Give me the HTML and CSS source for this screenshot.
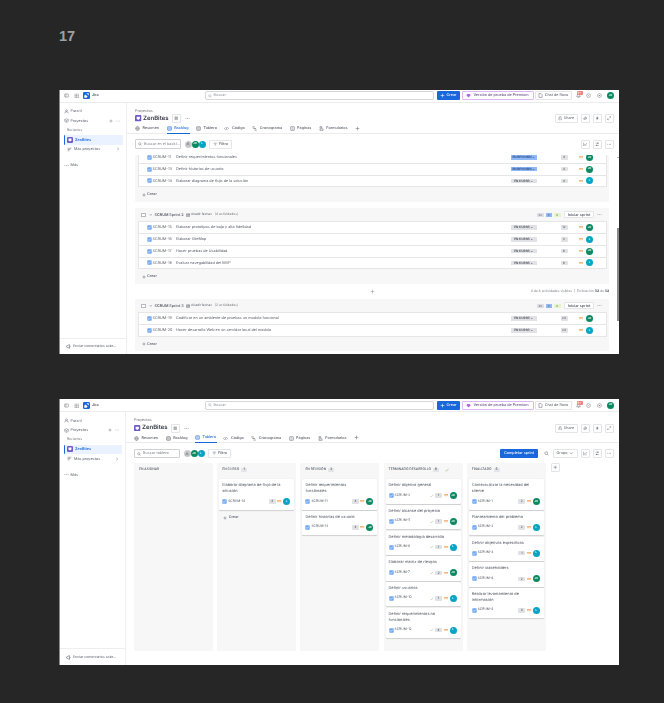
FILE: index.html
```html
<!DOCTYPE html>
<html lang="es">
<head>
  <meta charset="UTF-8">
  <title>17</title>
  <link rel="stylesheet" href="styles.css">
</head>
<body>
  <svg class="defs" width="0" height="0">
    <symbol id="i-panel" viewBox="0 0 16 16"><rect x="2" y="3" width="12" height="10" rx="1.5" fill="none" stroke="currentColor" stroke-width="1.6"/><path d="M6 3v10" stroke="currentColor" stroke-width="1.6"/></symbol>
    <symbol id="i-apps" viewBox="0 0 16 16"><path d="M2 2h3v3H2zM7 2h3v3H7zM12 2h3v3h-3zM2 7h3v3H2zM7 7h3v3H7zM12 7h3v3h-3zM2 12h3v3H2zM7 12h3v3H7zM12 12h3v3h-3z" fill="currentColor"/></symbol>
    <symbol id="i-jira" viewBox="0 0 16 16"><rect width="16" height="16" rx="3" fill="#1868db"/><path d="M8 3l5 0v5zM3 8l5 5H3zM5.5 5.5l5 5-2.5 2.5-5-5z" fill="#fff"/></symbol>
    <symbol id="i-search" viewBox="0 0 16 16"><circle cx="7" cy="7" r="4.5" fill="none" stroke="currentColor" stroke-width="1.6"/><path d="M10.5 10.5L14 14" stroke="currentColor" stroke-width="1.6"/></symbol>
    <symbol id="i-plus" viewBox="0 0 16 16"><path d="M8 2v12M2 8h12" stroke="currentColor" stroke-width="1.8"/></symbol>
    <symbol id="i-gem" viewBox="0 0 16 16"><path d="M4 3h8l3 4-7 7-7-7z" fill="currentColor"/></symbol>
    <symbol id="i-note" viewBox="0 0 16 16"><path d="M3 2h7l3 3v9H3z" fill="none" stroke="currentColor" stroke-width="1.5"/></symbol>
    <symbol id="i-bell" viewBox="0 0 16 16"><path d="M8 2a4 4 0 0 1 4 4v4l2 2H2l2-2V6a4 4 0 0 1 4-4zM6.5 14h3" fill="none" stroke="currentColor" stroke-width="1.5"/></symbol>
    <symbol id="i-help" viewBox="0 0 16 16"><circle cx="8" cy="8" r="6" fill="none" stroke="currentColor" stroke-width="1.6"/><circle cx="8" cy="8" r="1.5" fill="currentColor"/></symbol>
    <symbol id="i-gear" viewBox="0 0 16 16"><path d="M8 1.5l5.6 3.2v6.6L8 14.5l-5.6-3.2V4.7z" fill="none" stroke="currentColor" stroke-width="1.6"/><circle cx="8" cy="8" r="2" fill="currentColor"/></symbol>
    <symbol id="i-user" viewBox="0 0 16 16"><circle cx="8" cy="5.5" r="3" fill="none" stroke="currentColor" stroke-width="1.6"/><path d="M2.5 14a5.5 5.5 0 0 1 11 0" fill="none" stroke="currentColor" stroke-width="1.6"/></symbol>
    <symbol id="i-box" viewBox="0 0 16 16"><path d="M2 5l6-3 6 3v6l-6 3-6-3zM2 5l6 3 6-3M8 8v6" fill="none" stroke="currentColor" stroke-width="1.4"/></symbol>
    <symbol id="i-list" viewBox="0 0 16 16"><path d="M2 4h12M2 8h9M2 12h6" stroke="currentColor" stroke-width="1.8"/></symbol>
    <symbol id="i-logo" viewBox="0 0 16 16"><rect width="16" height="16" rx="3" fill="#6e5dc6"/><path d="M4 4h8v5l-4 3-4-3z" fill="#fff"/></symbol>
    <symbol id="i-team" viewBox="0 0 16 16"><path d="M3 3h4v4H3zM9 3h4v4H9zM3 9h4v4H3zM9 9h4v4H9z" fill="none" stroke="currentColor" stroke-width="1.5"/></symbol>
    <symbol id="i-dots" viewBox="0 0 16 16"><circle cx="3" cy="8" r="1.4" fill="currentColor"/><circle cx="8" cy="8" r="1.4" fill="currentColor"/><circle cx="13" cy="8" r="1.4" fill="currentColor"/></symbol>
    <symbol id="i-lock" viewBox="0 0 16 16"><rect x="3" y="7" width="10" height="7" rx="1" fill="none" stroke="currentColor" stroke-width="1.6"/><path d="M5 7V4.500a3 3 0 0 1 6 0" fill="none" stroke="currentColor" stroke-width="1.6"/></symbol>
    <symbol id="i-link" viewBox="0 0 16 16"><path d="M3 13l4-4M6 3l7 7M9 2l5 5-3 3-5-5zM2 9l5 5 2-2-5-5z" fill="none" stroke="currentColor" stroke-width="1.5"/></symbol>
    <symbol id="i-bolt" viewBox="0 0 16 16"><path d="M9 1L3 9h4l-1 6 7-9H9z" fill="currentColor"/></symbol>
    <symbol id="i-expand" viewBox="0 0 16 16"><path d="M9 2h5v5M14 2L9 7M7 14H2V9M2 14l5-5" fill="none" stroke="currentColor" stroke-width="1.6"/></symbol>
    <symbol id="i-globe" viewBox="0 0 16 16"><circle cx="8" cy="8" r="6" fill="none" stroke="currentColor" stroke-width="1.6"/><path d="M2 8h12M8 2c-3 4-3 8 0 12M8 2c3 4 3 8 0 12" fill="none" stroke="currentColor" stroke-width="1.2"/></symbol>
    <symbol id="i-backlog" viewBox="0 0 16 16"><rect x="2" y="2" width="12" height="12" rx="1.5" fill="none" stroke="currentColor" stroke-width="1.6"/><path d="M2 6h12M2 10h12" stroke="currentColor" stroke-width="1.6"/></symbol>
    <symbol id="i-board" viewBox="0 0 16 16"><rect x="1.500" y="2.500" width="13" height="11" rx="1.500" fill="none" stroke="currentColor" stroke-width="1.6"/><path d="M6 2.500v11M10 2.500v11" stroke="currentColor" stroke-width="1.4"/></symbol>
    <symbol id="i-code" viewBox="0 0 16 16"><path d="M5 4L1.500 8 5 12M11 4l3.500 4-3.500 4M9.500 3l-3 10" fill="none" stroke="currentColor" stroke-width="1.5"/></symbol>
    <symbol id="i-gantt" viewBox="0 0 16 16"><path d="M1 3h8M4 8h9M8 13h7" stroke="currentColor" stroke-width="2"/></symbol>
    <symbol id="i-pages" viewBox="0 0 16 16"><rect x="2" y="2" width="12" height="12" rx="1.500" fill="none" stroke="currentColor" stroke-width="1.6"/><path d="M5 6h6M5 10h6" stroke="currentColor" stroke-width="1.4"/></symbol>
    <symbol id="i-form" viewBox="0 0 16 16"><path d="M3 2h6v4H3zM3 9h10v5H3z" fill="none" stroke="currentColor" stroke-width="1.6"/></symbol>
    <symbol id="i-filter" viewBox="0 0 16 16"><path d="M2 4h12M4.500 8h7M7 12h2" stroke="currentColor" stroke-width="1.8"/></symbol>
    <symbol id="i-chart" viewBox="0 0 16 16"><path d="M2 2v12h12M4.500 10l3-3 2 2 4-5" fill="none" stroke="currentColor" stroke-width="1.6"/></symbol>
    <symbol id="i-sliders" viewBox="0 0 16 16"><path d="M2 4h12M2 12h12" stroke="currentColor" stroke-width="1.6"/><circle cx="10" cy="4" r="2" fill="currentColor"/><circle cx="6" cy="12" r="2" fill="currentColor"/></symbol>
    <symbol id="i-task" viewBox="0 0 16 16"><rect x="1" y="1" width="14" height="14" rx="2" fill="#6fa6f3"/><path d="M4 8.500l2.800 2.500L12 5" fill="none" stroke="#fff" stroke-width="2"/></symbol>
    <symbol id="i-medium" viewBox="0 0 16 16" preserveAspectRatio="none"><path d="M0 4h16M0 12h16" stroke="#f2a35a" stroke-width="5"/></symbol>
    <symbol id="i-check" viewBox="0 0 16 16"><path d="M2 9l4 4 8-10" fill="none" stroke="currentColor" stroke-width="2.400"/></symbol>
    <symbol id="i-chev-d" viewBox="0 0 16 16"><path d="M3 5l5 6 5-6" fill="none" stroke="currentColor" stroke-width="1.800"/></symbol>
    <symbol id="i-chev-r" viewBox="0 0 16 16"><path d="M5 3l6 5-6 5" fill="none" stroke="currentColor" stroke-width="1.800"/></symbol>
    <symbol id="i-cal" viewBox="0 0 16 16"><path d="M2 3h12v11H2zM2 7h12M6 9l2 3 5-9" fill="none" stroke="currentColor" stroke-width="1.700"/></symbol>
    <symbol id="i-feedback" viewBox="0 0 16 16"><path d="M2 6l9-4v12L2 10zM13 6v4" fill="none" stroke="currentColor" stroke-width="1.700"/></symbol>
  </svg>

  <h1 class="slide-no">17</h1>

  <!-- captura backlog -->
  <section class="shot shot-backlog">
    <header class="topbar">
      <svg class="ico nav-ico"><use href="#i-panel"/></svg>
      <svg class="ico nav-ico"><use href="#i-apps"/></svg>
      <svg class="ico jira-logo"><use href="#i-jira"/></svg>
      <span class="jira-name">Jira</span>
      <div class="global-search"><svg class="ico"><use href="#i-search"/></svg>Buscar</div>
      <button class="btn-create"><svg class="ico"><use href="#i-plus"/></svg>Crear</button>
      <button class="btn-premium"><svg class="ico"><use href="#i-gem"/></svg>Versión de prueba de Premium</button>
      <button class="btn-rovo"><svg class="ico"><use href="#i-note"/></svg>Chat de Rovo</button>
      <span class="bell"><svg class="ico"><use href="#i-bell"/></svg><i class="badge">9+</i></span>
      <svg class="ico top-ico"><use href="#i-help"/></svg>
      <svg class="ico top-ico"><use href="#i-gear"/></svg>
      <span class="avatar green top-avatar">JR</span>
    </header>
    <div class="body-grid">
      <aside class="sidebar">
        <div class="side-row"><svg class="ico"><use href="#i-user"/></svg>Para ti</div>
        <div class="side-row"><svg class="ico"><use href="#i-box"/></svg>Proyectos<span class="side-end"><svg class="ico"><use href="#i-plus"/></svg><svg class="ico"><use href="#i-dots"/></svg></span></div>
        <div class="side-label">Recientes</div>
        <div class="side-row side-active"><svg class="ico"><use href="#i-logo"/></svg>ZenBites</div>
        <div class="side-row side-sub"><svg class="ico"><use href="#i-list"/></svg>Más proyectos<span class="side-end"><svg class="ico"><use href="#i-chev-r"/></svg></span></div>
        <div class="side-row side-more"><svg class="ico"><use href="#i-dots"/></svg>Más</div>
        <div class="side-feedback"><svg class="ico"><use href="#i-feedback"/></svg>Enviar comentarios sobr...</div>
      </aside>
      <main class="main">
        <div class="crumb">Proyectos</div>
        <div class="title-row">
          <svg class="ico title-logo"><use href="#i-logo"/></svg>
          <h2>ZenBites</h2>
          <span class="tool-box title-team"><svg class="ico"><use href="#i-team"/></svg></span>
          <svg class="ico title-dots"><use href="#i-dots"/></svg>
          <span class="tool-box share"><svg class="ico"><use href="#i-lock"/></svg>Share</span>
          <span class="tool-box"><svg class="ico"><use href="#i-link"/></svg></span>
          <span class="tool-box"><svg class="ico"><use href="#i-bolt"/></svg></span>
          <span class="tool-box"><svg class="ico"><use href="#i-expand"/></svg></span>
        </div>
        <nav class="tabs">
          <a class="tab"><svg class="ico"><use href="#i-globe"/></svg>Resumen</a>
          <a class="tab tab-active"><svg class="ico"><use href="#i-backlog"/></svg>Backlog</a>
          <a class="tab"><svg class="ico"><use href="#i-board"/></svg>Tablero</a>
          <a class="tab"><svg class="ico"><use href="#i-code"/></svg>Código</a>
          <a class="tab"><svg class="ico"><use href="#i-gantt"/></svg>Cronograma</a>
          <a class="tab"><svg class="ico"><use href="#i-pages"/></svg>Páginas</a>
          <a class="tab"><svg class="ico"><use href="#i-form"/></svg>Formularios</a>
          <svg class="ico tab-plus"><use href="#i-plus"/></svg>
        </nav>
        <div class="toolbar">
          <div class="search-box"><svg class="ico"><use href="#i-search"/></svg>Buscar en el backl...</div>
          <div class="avatars"><span class="avatar grey"><svg class="ico"><use href="#i-user"/></svg></span><span class="avatar green">JR</span><span class="avatar teal">L</span></div>
          <span class="tool-box filter"><svg class="ico"><use href="#i-filter"/></svg>Filtro</span>
          <span class="tool-box push"><svg class="ico"><use href="#i-chart"/></svg></span>
          <span class="tool-box"><svg class="ico"><use href="#i-sliders"/></svg></span>
          <span class="tool-box"><svg class="ico"><use href="#i-dots"/></svg></span>
        </div>
        <div class="backlog">
          <div class="sprint sprint-first">
            <div class="rows">
              <div class="row"><svg class="ico"><use href="#i-task"/></svg><span class="key">SCRUM-11</span><span class="name">Definir requerimientos funcionales</span><span class="status review">EN REVISIÓN ⌄</span><span class="points">4</span><svg class="ico prio"><use href="#i-medium"/></svg><span class="avatar green">JR</span></div>
              <div class="row"><svg class="ico"><use href="#i-task"/></svg><span class="key">SCRUM-13</span><span class="name">Definir historias de usuario</span><span class="status review">EN REVISIÓN ⌄</span><span class="points">4</span><svg class="ico prio"><use href="#i-medium"/></svg><span class="avatar green">JR</span></div>
              <div class="row"><svg class="ico"><use href="#i-task"/></svg><span class="key">SCRUM-14</span><span class="name">Elaborar diagrama de flujo de la solución</span><span class="status">EN CURSO ⌄</span><span class="points">4</span><svg class="ico prio"><use href="#i-medium"/></svg><span class="avatar teal">L</span></div>
            </div>
            <div class="create"><svg class="ico"><use href="#i-plus"/></svg>Crear</div>
          </div>

          <div class="sprint sprint-second">
            <div class="sprint-head">
              <span class="checkbox"></span>
              <svg class="ico sprint-chev"><use href="#i-chev-d"/></svg>
              <strong>SCRUM Sprint 2</strong>
              <svg class="ico sprint-cal"><use href="#i-cal"/></svg>
              <span class="sprint-dates">Añadir fechas</span>
              <span class="sprint-count">(4 actividades)</span>
              <span class="chip chip-grey">32</span><span class="chip chip-blue">0</span><span class="chip chip-green">0</span>
              <span class="tool-box start">Iniciar sprint</span>
              <svg class="ico sprint-dots"><use href="#i-dots"/></svg>
            </div>
            <div class="rows">
              <div class="row"><svg class="ico"><use href="#i-task"/></svg><span class="key">SCRUM-15</span><span class="name">Elaborar prototipos de bajo y alta fidelidad</span><span class="status">EN CURSO ⌄</span><span class="points">12</span><svg class="ico prio"><use href="#i-medium"/></svg><span class="avatar green">JR</span></div>
              <div class="row"><svg class="ico"><use href="#i-task"/></svg><span class="key">SCRUM-16</span><span class="name">Elaborar SiteMap</span><span class="status">EN CURSO ⌄</span><span class="points">8</span><svg class="ico prio"><use href="#i-medium"/></svg><span class="avatar teal">L</span></div>
              <div class="row"><svg class="ico"><use href="#i-task"/></svg><span class="key">SCRUM-17</span><span class="name">Hacer pruebas de Usabilidad</span><span class="status">EN CURSO ⌄</span><span class="points">6</span><svg class="ico prio"><use href="#i-medium"/></svg><span class="avatar green">JR</span></div>
              <div class="row"><svg class="ico"><use href="#i-task"/></svg><span class="key">SCRUM-18</span><span class="name">Evaluar navegabilidad del MVP</span><span class="status">EN CURSO ⌄</span><span class="points">6</span><svg class="ico prio"><use href="#i-medium"/></svg><span class="avatar teal">L</span></div>
            </div>
            <div class="create"><svg class="ico"><use href="#i-plus"/></svg>Crear</div>
          </div>

          <div class="sprint-foot">
            <svg class="ico foot-ico"><use href="#i-plus"/></svg>
            <span>4 de 4 actividades visibles&nbsp; | &nbsp;Estimación <b>32</b> de <b>32</b></span>
          </div>

          <div class="sprint">
            <div class="sprint-head">
              <span class="checkbox"></span>
              <svg class="ico sprint-chev"><use href="#i-chev-d"/></svg>
              <strong>SCRUM Sprint 3</strong>
              <svg class="ico sprint-cal"><use href="#i-cal"/></svg>
              <span class="sprint-dates">Añadir fechas</span>
              <span class="sprint-count">(2 actividades)</span>
              <span class="chip chip-grey">48</span><span class="chip chip-blue">0</span><span class="chip chip-green">0</span>
              <span class="tool-box start">Iniciar sprint</span>
              <svg class="ico sprint-dots"><use href="#i-dots"/></svg>
            </div>
            <div class="rows">
              <div class="row"><svg class="ico"><use href="#i-task"/></svg><span class="key">SCRUM-19</span><span class="name">Codificar en un ambiente de pruebas un modulo funcional</span><span class="status">EN CURSO ⌄</span><span class="points">24</span><svg class="ico prio"><use href="#i-medium"/></svg><span class="avatar green">JR</span></div>
              <div class="row"><svg class="ico"><use href="#i-task"/></svg><span class="key">SCRUM-20</span><span class="name">Hacer desarrollo Web en un servidor local del modulo</span><span class="status">EN CURSO ⌄</span><span class="points">24</span><svg class="ico prio"><use href="#i-medium"/></svg><span class="avatar teal">L</span></div>
            </div>
            <div class="create"><svg class="ico"><use href="#i-plus"/></svg>Crear</div>
          </div>
          <span class="scroll-arrow"></span>
          <span class="scroll-thumb"></span>
        </div>
      </main>
    </div>
  </section>

  <!-- captura tablero -->
  <section class="shot shot-board">
    <header class="topbar">
      <svg class="ico nav-ico"><use href="#i-panel"/></svg>
      <svg class="ico nav-ico"><use href="#i-apps"/></svg>
      <svg class="ico jira-logo"><use href="#i-jira"/></svg>
      <span class="jira-name">Jira</span>
      <div class="global-search"><svg class="ico"><use href="#i-search"/></svg>Buscar</div>
      <button class="btn-create"><svg class="ico"><use href="#i-plus"/></svg>Crear</button>
      <button class="btn-premium"><svg class="ico"><use href="#i-gem"/></svg>Versión de prueba de Premium</button>
      <button class="btn-rovo"><svg class="ico"><use href="#i-note"/></svg>Chat de Rovo</button>
      <span class="bell"><svg class="ico"><use href="#i-bell"/></svg><i class="badge">9+</i></span>
      <svg class="ico top-ico"><use href="#i-help"/></svg>
      <svg class="ico top-ico"><use href="#i-gear"/></svg>
      <span class="avatar green top-avatar">JR</span>
    </header>
    <div class="body-grid">
      <aside class="sidebar">
        <div class="side-row"><svg class="ico"><use href="#i-user"/></svg>Para ti</div>
        <div class="side-row"><svg class="ico"><use href="#i-box"/></svg>Proyectos<span class="side-end"><svg class="ico"><use href="#i-plus"/></svg><svg class="ico"><use href="#i-dots"/></svg></span></div>
        <div class="side-label">Recientes</div>
        <div class="side-row side-active"><svg class="ico"><use href="#i-logo"/></svg>ZenBites</div>
        <div class="side-row side-sub"><svg class="ico"><use href="#i-list"/></svg>Más proyectos<span class="side-end"><svg class="ico"><use href="#i-chev-r"/></svg></span></div>
        <div class="side-row side-more"><svg class="ico"><use href="#i-dots"/></svg>Más</div>
        <div class="side-feedback"><svg class="ico"><use href="#i-feedback"/></svg>Enviar comentarios sobr...</div>
      </aside>
      <main class="main">
        <div class="crumb">Proyectos</div>
        <div class="title-row">
          <svg class="ico title-logo"><use href="#i-logo"/></svg>
          <h2>ZenBites</h2>
          <span class="tool-box title-team"><svg class="ico"><use href="#i-team"/></svg></span>
          <svg class="ico title-dots"><use href="#i-dots"/></svg>
          <span class="tool-box share"><svg class="ico"><use href="#i-lock"/></svg>Share</span>
          <span class="tool-box"><svg class="ico"><use href="#i-link"/></svg></span>
          <span class="tool-box"><svg class="ico"><use href="#i-bolt"/></svg></span>
          <span class="tool-box"><svg class="ico"><use href="#i-expand"/></svg></span>
        </div>
        <nav class="tabs">
          <a class="tab"><svg class="ico"><use href="#i-globe"/></svg>Resumen</a>
          <a class="tab"><svg class="ico"><use href="#i-backlog"/></svg>Backlog</a>
          <a class="tab tab-active"><svg class="ico"><use href="#i-board"/></svg>Tablero</a>
          <a class="tab"><svg class="ico"><use href="#i-code"/></svg>Código</a>
          <a class="tab"><svg class="ico"><use href="#i-gantt"/></svg>Cronograma</a>
          <a class="tab"><svg class="ico"><use href="#i-pages"/></svg>Páginas</a>
          <a class="tab"><svg class="ico"><use href="#i-form"/></svg>Formularios</a>
          <svg class="ico tab-plus"><use href="#i-plus"/></svg>
        </nav>
        <div class="toolbar">
          <div class="search-box"><svg class="ico"><use href="#i-search"/></svg>Buscar tablero</div>
          <div class="avatars"><span class="avatar grey"><svg class="ico"><use href="#i-user"/></svg></span><span class="avatar green">JR</span><span class="avatar teal">L</span></div>
          <span class="tool-box filter"><svg class="ico"><use href="#i-filter"/></svg>Filtro</span>
          <button class="btn-complete push">Completar sprint</button>
          <svg class="ico tool-search"><use href="#i-search"/></svg>
          <span class="tool-box group">Grupo <svg class="ico"><use href="#i-chev-d"/></svg></span>
          <span class="tool-box"><svg class="ico"><use href="#i-chart"/></svg></span>
          <span class="tool-box"><svg class="ico"><use href="#i-sliders"/></svg></span>
          <span class="tool-box"><svg class="ico"><use href="#i-dots"/></svg></span>
        </div>
        <div class="board">
          <div class="col">
            <div class="col-head">EN ASIGNAR</div>
          </div>
          <div class="col">
            <div class="col-head">EN CURSO <i>1</i></div>
            <article class="card">
              <p>Elaborar diagrama de flujo de la solución</p>
              <div class="card-foot"><svg class="ico"><use href="#i-task"/></svg><span class="card-key">SCRUM-14</span><span class="points">4</span><svg class="ico prio"><use href="#i-medium"/></svg><span class="avatar teal">L</span></div>
            </article>
            <div class="create card-create"><svg class="ico"><use href="#i-plus"/></svg>Crear</div>
          </div>
          <div class="col">
            <div class="col-head">EN REVISIÓN <i>2</i></div>
            <article class="card">
              <p>Definir requerimientos funcionales</p>
              <div class="card-foot"><svg class="ico"><use href="#i-task"/></svg><span class="card-key">SCRUM-11</span><span class="points">4</span><svg class="ico prio"><use href="#i-medium"/></svg><span class="avatar green">JR</span></div>
            </article>
            <article class="card">
              <p>Definir historias de usuario</p>
              <div class="card-foot"><svg class="ico"><use href="#i-task"/></svg><span class="card-key">SCRUM-13</span><span class="points">4</span><svg class="ico prio"><use href="#i-medium"/></svg><span class="avatar green">JR</span></div>
            </article>
          </div>
          <div class="col">
            <div class="col-head">TERMINADO DESARROLLO <i>6</i><svg class="ico done-check"><use href="#i-check"/></svg></div>
            <article class="card">
              <p>Definir objetivo general</p>
              <div class="card-foot"><svg class="ico"><use href="#i-task"/></svg><span class="card-key">SCRUM-3</span><svg class="ico card-done"><use href="#i-check"/></svg><span class="points">1</span><svg class="ico prio"><use href="#i-medium"/></svg><span class="avatar green">JR</span></div>
            </article>
            <article class="card">
              <p>Definir alcance del proyecto</p>
              <div class="card-foot"><svg class="ico"><use href="#i-task"/></svg><span class="card-key">SCRUM-5</span><svg class="ico card-done"><use href="#i-check"/></svg><span class="points">1</span><svg class="ico prio"><use href="#i-medium"/></svg><span class="avatar green">JR</span></div>
            </article>
            <article class="card">
              <p>Definir metodología desarrollo</p>
              <div class="card-foot"><svg class="ico"><use href="#i-task"/></svg><span class="card-key">SCRUM-6</span><svg class="ico card-done"><use href="#i-check"/></svg><span class="points">1</span><svg class="ico prio"><use href="#i-medium"/></svg><span class="avatar teal">L</span></div>
            </article>
            <article class="card">
              <p>Elaborar matriz de riesgos</p>
              <div class="card-foot"><svg class="ico"><use href="#i-task"/></svg><span class="card-key">SCRUM-7</span><svg class="ico card-done"><use href="#i-check"/></svg><span class="points">2</span><svg class="ico prio"><use href="#i-medium"/></svg><span class="avatar green">JR</span></div>
            </article>
            <article class="card">
              <p>Definir usuarios</p>
              <div class="card-foot"><svg class="ico"><use href="#i-task"/></svg><span class="card-key">SCRUM-10</span><svg class="ico card-done"><use href="#i-check"/></svg><span class="points">1</span><svg class="ico prio"><use href="#i-medium"/></svg><span class="avatar teal">L</span></div>
            </article>
            <article class="card">
              <p>Definir requerimientos no funcionales</p>
              <div class="card-foot"><svg class="ico"><use href="#i-task"/></svg><span class="card-key">SCRUM-12</span><svg class="ico card-done"><use href="#i-check"/></svg><span class="points">4</span><svg class="ico prio"><use href="#i-medium"/></svg><span class="avatar teal">L</span></div>
            </article>
          </div>
          <div class="col">
            <div class="col-head">FINALIZADO <i>5</i></div>
            <article class="card">
              <p>Contextualizar la necesidad del cliente</p>
              <div class="card-foot"><svg class="ico"><use href="#i-task"/></svg><span class="card-key">SCRUM-1</span><span class="points">2</span><svg class="ico prio"><use href="#i-medium"/></svg><span class="avatar green">JR</span></div>
            </article>
            <article class="card">
              <p>Planteamiento del problema</p>
              <div class="card-foot"><svg class="ico"><use href="#i-task"/></svg><span class="card-key">SCRUM-2</span><span class="points">2</span><svg class="ico prio"><use href="#i-medium"/></svg><span class="avatar teal">L</span></div>
            </article>
            <article class="card">
              <p>Definir objetivos específicos</p>
              <div class="card-foot"><svg class="ico"><use href="#i-task"/></svg><span class="card-key">SCRUM-4</span><span class="points">1</span><svg class="ico prio"><use href="#i-medium"/></svg><span class="avatar teal">L</span></div>
            </article>
            <article class="card">
              <p>Definir stakeholders</p>
              <div class="card-foot"><svg class="ico"><use href="#i-task"/></svg><span class="card-key">SCRUM-8</span><span class="points">2</span><svg class="ico prio"><use href="#i-medium"/></svg><span class="avatar green">JR</span></div>
            </article>
            <article class="card">
              <p>Realizar levantamiento de información</p>
              <div class="card-foot"><svg class="ico"><use href="#i-task"/></svg><span class="card-key">SCRUM-9</span><span class="points">4</span><svg class="ico prio"><use href="#i-medium"/></svg><span class="avatar teal">L</span></div>
            </article>
          </div>
          <span class="tool-box add-col"><svg class="ico"><use href="#i-plus"/></svg></span>
        </div>
      </main>
    </div>
  </section>
</body>
</html>
```

FILE: styles.css
```css
* {
  box-sizing: border-box;
  margin: 0;
  padding: 0;
}

body {
  background: #262626;
  width: 664px;
  height: 703px;
  overflow: hidden;
  padding: 30px 0 0 59px;
  font-family: Inter, "Noto Sans", sans-serif;
  color: #555b66;
  text-rendering: geometricPrecision;
}

.defs {
  position: absolute;
}

.slide-no {
  height: 15px;
  font: bold 14.5px/15px "Liberation Sans", sans-serif;
  color: #a0a0a0;
}

.ico {
  width: 5px;
  height: 5px;
  flex: none;
  display: block;
}

.shot {
  width: 560px;
  height: 264px;
  background: #fff;
  border-left: 1px solid #8a8a8a;
  display: flex;
  flex-direction: column;
  overflow: hidden;
  font-size: 3.75px;
  line-height: 1.2;
  filter: blur(0.25px);
}

.shot-backlog {
  margin-top: 44.5px;
}

.shot-board {
  margin-top: 45.5px;
  height: 266px;
}

/* barra superior */
.topbar {
  height: 13px;
  flex: none;
  display: flex;
  align-items: center;
  padding-left: 4px;
  border-bottom: 1px solid #ececec;
}

.nav-ico {
  margin-right: 5px;
  color: #777;
}

.jira-logo {
  width: 7px;
  height: 7px;
  margin-right: 2px;
  margin-left: -1px;
}

.jira-name {
  font-weight: 600;
  width: 112.500px;
}

.global-search {
  width: 229px;
  height: 9px;
  border: 1px solid #d5d7da;
  border-radius: 2px;
  display: flex;
  align-items: center;
  gap: 2px;
  padding-left: 2px;
  color: #8a8f98;
}

.global-search .ico {
  width: 4px;
  height: 4px;
}

.btn-create,
.btn-premium,
.btn-rovo,
.btn-complete {
  font: inherit;
  text-rendering: inherit;
  border-radius: 1px;
  height: 9px;
  display: flex;
  align-items: center;
  justify-content: center;
  background: #fff;
  white-space: nowrap;
}

.btn-create {
  width: 23px;
  margin-left: 3px;
  gap: 2px;
  border: 0;
  background: #1868db;
  color: #fff;
  font-weight: 500;
}

.btn-premium {
  width: 72px;
  margin-left: 2px;
  gap: 2px;
  border: 1px solid #dcb9f3;
  color: #6a4f8c;
  font-weight: 500;
}

.btn-premium .ico {
  color: #b168e6;
}

.btn-rovo {
  width: 37px;
  margin-left: 1px;
  gap: 2px;
  border: 1px solid #e6e6e6;
  color: #555b66;
}

.bell {
  position: relative;
  margin-left: 4px;
  margin-right: 5.500px;
}

.badge {
  position: absolute;
  top: -2px;
  left: 1px;
  width: 6px;
  height: 4px;
  border-radius: 1px;
  background: #e9847a;
  color: #fff;
  font: normal 3px/4px Inter, sans-serif;
  text-align: center;
}

.top-ico {
  margin-right: 5.500px;
  color: #777;
}

.avatar {
  width: 7px;
  height: 7px;
  flex: none;
  border-radius: 50%;
  color: #fff;
  font-size: 2.800px;
  font-weight: 600;
  display: flex;
  align-items: center;
  justify-content: center;
}

.green {
  background: #0b8a62;
}

.teal {
  background: #07a4c4;
}

.grey {
  background: #c9cbce;
  color: #666;
}

/* lateral */
.body-grid {
  flex: 1;
  min-height: 0;
  display: grid;
  grid-template-columns: 67px 1fr;
}

.shot-board .body-grid {
  grid-template-columns: 66px 1fr;
}

.sidebar {
  border-right: 1px solid #eeeeee;
  padding-top: 4px;
  display: flex;
  flex-direction: column;
  min-height: 0;
}

.side-row {
  height: 9.500px;
  display: flex;
  align-items: center;
  gap: 2px;
  padding: 0 3px 0 3.500px;
  margin-right: 3px;
}

.side-row .ico {
  color: #6b6f76;
}

.side-label {
  height: 9.500px;
  line-height: 9.500px;
  padding-left: 7px;
  font-size: 3.300px;
  color: #6b6f76;
}

.side-active {
  margin-left: 4px;
  padding-left: 2px;
  background: #e9f2fe;
  border-left: 0.600px solid #1868db;
  border-radius: 1px;
  color: #1868db;
  font-weight: 600;
}

.side-active .ico {
  width: 6px;
  height: 6px;
}

.side-sub {
  padding-left: 7px;
}

.side-more {
  margin-top: 6.500px;
}

.side-end {
  margin-left: auto;
  display: flex;
  gap: 3px;
}

.side-end .ico {
  width: 4px;
  height: 4px;
}

.side-feedback {
  margin-top: auto;
  height: 15.500px;
  border-top: 1px solid #eeeeee;
  display: flex;
  align-items: center;
  gap: 2px;
  padding-left: 6px;
  font-size: 3.500px;
}

.shot-board .side-feedback {
  height: 17px;
}

/* cabecera */
.main {
  min-width: 0;
  min-height: 0;
  display: flex;
  flex-direction: column;
  padding: 4px 10px 0 8px;
}

.crumb {
  height: 8px;
  line-height: 8px;
  color: #6b6f76;
}

.title-row {
  height: 8px;
  margin-right: -4.500px;
  display: flex;
  align-items: center;
}

.title-row h2 {
  font-size: 6px;
  font-weight: 600;
  color: #2f3540;
  margin-right: 2px;
}

.title-logo {
  width: 6.500px;
  height: 6.500px;
  margin-right: 1.500px;
}

.tool-box {
  height: 9px;
  width: 9px;
  flex: none;
  border: 1px solid #e4e5e7;
  border-radius: 1px;
  display: flex;
  align-items: center;
  justify-content: center;
  gap: 1.500px;
  background: #fff;
  margin-left: 3px;
}

.tool-box .ico {
  width: 4.500px;
  height: 4.500px;
  color: #6b6f76;
}

.title-team {
  margin-left: 1px;
}

.title-dots {
  margin-left: 4px;
  margin-right: auto;
  color: #777;
}

.share {
  width: 23px;
}

/* pestañas */
.tabs {
  margin-top: 2px;
  height: 9px;
  flex: none;
  margin-right: -10px;
  margin-left: -8px;
  padding-left: 8px;
  border-bottom: 1px solid #ececec;
  display: flex;
  gap: 6.500px;
}

.tab {
  height: 9px;
  display: flex;
  align-items: center;
  gap: 2.500px;
  font-weight: 500;
  padding: 0 1px 1px 0;
}

.tab .ico {
  color: #5f646c;
}

.tab-active {
  color: #1868db;
  border-bottom: 1px solid #1868db;
}

.tab-active .ico {
  color: #1868db;
}

.tab-plus {
  align-self: center;
  margin-top: -1px;
  color: #777;
}

/* herramientas */
.toolbar {
  height: 21px;
  flex: none;
  margin-right: -4.500px;
  display: flex;
  align-items: center;
}

.search-box {
  width: 46px;
  height: 9.500px;
  border: 1px solid #cfd1d4;
  border-radius: 1px;
  display: flex;
  align-items: center;
  gap: 2px;
  padding-left: 2px;
  color: #7d828b;
  white-space: nowrap;
}

.search-box .ico {
  width: 4px;
  height: 4px;
  color: #555;
}

.avatars {
  display: flex;
  gap: 0;
  margin-left: 3.500px;
}

.avatars .ico {
  width: 4px;
  height: 4px;
}

.filter {
  width: 23px;
  margin-left: 3.500px;
  font-weight: 500;
}

.push {
  margin-left: auto;
}

.btn-complete {
  width: 38px;
  height: 9.500px;
  border: 0;
  background: #1868db;
  color: #fff;
  font-weight: 500;
}

.tool-search {
  margin-left: 6px;
  color: #666;
}

.group {
  width: 25px;
  margin-left: 3.500px;
}

/* backlog */
.backlog {
  flex: 1;
  min-height: 0;
  overflow: hidden;
  position: relative;
  margin-right: -10px;
  padding-right: 10px;
}

.sprint {
  background: #f7f7f7;
  border-radius: 1px;
  padding: 0 2px 0 3px;
}

.sprint-first {
  margin-top: -3.500px;
}

.sprint-second {
  margin-top: 6.500px;
}

.sprint-head {
  height: 13px;
  display: flex;
  align-items: center;
  padding-left: 3px;
}

.sprint-head strong {
  font-weight: 600;
  margin-left: 2.500px;
}

.checkbox {
  width: 4.500px;
  height: 4.500px;
  border: 0.500px solid #b5b8bd;
  background: #fff;
  border-radius: 0.500px;
}

.sprint-chev {
  width: 3.500px;
  height: 3.500px;
  margin-left: 3px;
}

.sprint-cal {
  width: 4px;
  height: 4px;
  margin-left: 2.500px;
}

.sprint-dates {
  font-size: 3.200px;
  margin-left: 1px;
}

.sprint-count {
  font-size: 3.300px;
  margin-left: 3px;
  margin-right: auto;
  color: #777;
}

.chip {
  width: 6.500px;
  height: 4.500px;
  border-radius: 0.500px;
  margin-left: 2px;
  font-size: 2.800px;
  line-height: 4.500px;
  text-align: center;
}

.chip-grey {
  background: #dcdfe3;
}

.chip-blue {
  background: #8fb8f6;
}

.chip-green {
  background: #e3f5c9;
}

.start {
  width: 30px;
  height: 7px;
  margin-left: 3.500px;
  font-weight: 600;
  border-width: 0.600px;
}

.sprint-dots {
  margin-left: 3px;
  margin-right: 5px;
  color: #888;
}

.rows {
  background: #fff;
  border: 0.600px solid #e6e6e6;
  border-bottom: 0;
}

.row {
  height: 11.750px;
  display: flex;
  align-items: center;
  padding-left: 7.500px;
  border-bottom: 0.600px solid #e6e6e6;
}

.key {
  margin-left: 1px;
  width: 23.500px;
  color: #5f646c;
}

.name {
  flex: 1;
  white-space: nowrap;
}

.status {
  width: 26px;
  height: 4.500px;
  line-height: 4.500px;
  background: #e0e2e5;
  border-radius: 0.500px;
  text-align: center;
  font-size: 3px;
  font-weight: 600;
  color: #454b55;
  white-space: nowrap;
  overflow: hidden;
}

.review {
  background: #8fb8f6;
  color: #1c3f7a;
}

.points {
  width: 7px;
  height: 4.500px;
  line-height: 4.500px;
  background: #e0e2e5;
  border-radius: 1px;
  text-align: center;
  font-size: 3px;
  font-weight: 500;
}

.row .points {
  margin-left: 24px;
}

.prio {
  width: 4.500px;
  height: 2.500px;
  margin: 0 3px 0 11px;
}

.row .avatar {
  margin-right: 13px;
}

.create {
  height: 14.500px;
  display: flex;
  align-items: center;
  gap: 1.500px;
  padding-left: 3.500px;
  font-weight: 500;
}

.create .ico {
  width: 4px;
  height: 4px;
}

.sprint-foot {
  height: 15.500px;
  display: flex;
  align-items: center;
  justify-content: flex-end;
  position: relative;
  font-size: 3.300px;
  color: #7a7f87;
}

.sprint-foot b {
  color: #3d434d;
}

.foot-ico {
  position: absolute;
  left: 234.500px;
  top: 5px;
  color: #999;
}

.scroll-thumb {
  position: absolute;
  right: 0;
  top: 73px;
  width: 2px;
  height: 93px;
  background: #8b8b8b;
}

.scroll-arrow {
  position: absolute;
  right: 0;
  top: 2px;
  border: 1px solid transparent;
  border-bottom: 1.500px solid #777;
  border-top: 0;
}

/* tablero */
.board {
  flex: 1;
  min-height: 0;
  display: flex;
  align-items: flex-start;
  gap: 4.200px;
  margin-top: -1px;
}

.col {
  width: 79px;
  height: 188px;
  flex: none;
  background: #f7f7f7;
  border-radius: 1px;
  padding: 0 2px;
  display: flex;
  flex-direction: column;
  gap: 1.400px;
}

.col-head {
  height: 14.500px;
  flex: none;
  margin-bottom: 0.500px;
  padding-left: 3px;
  display: flex;
  align-items: center;
  gap: 2px;
  font-size: 3.300px;
  font-weight: 500;
  color: #5f646c;
}

.col-head i {
  font-style: normal;
  background: #e3e5e8;
  border-radius: 1px;
  width: 6px;
  text-align: center;
  font-weight: 600;
}

.done-check {
  width: 4px;
  height: 4px;
  margin-left: 4px;
  color: #8cbf6a;
}

.card {
  background: #fff;
  border-radius: 1px;
  box-shadow: 0 0.500px 1px rgba(0, 0, 0, 0.16);
  padding: 3px 4px 4px 3px;
  flex: none;
}

.card p {
  font-size: 3.900px;
  line-height: 6px;
  margin-bottom: 3.300px;
  padding-right: 8px;
}

.card-foot {
  height: 8px;
  display: flex;
  align-items: center;
}

.card-key {
  margin-left: 1px;
  margin-right: auto;
  font-size: 3.300px;
}

.card-done {
  width: 3.500px;
  height: 3.500px;
  margin-right: 1.500px;
  color: #9bc47d;
}

.card .prio {
  margin: 0 1.500px 0 1.500px;
}

.card-create {
  height: 9px;
  padding-left: 4px;
  margin-top: 2px;
}

.add-col {
  margin-top: 0;
  margin-left: 1px;
}
```
